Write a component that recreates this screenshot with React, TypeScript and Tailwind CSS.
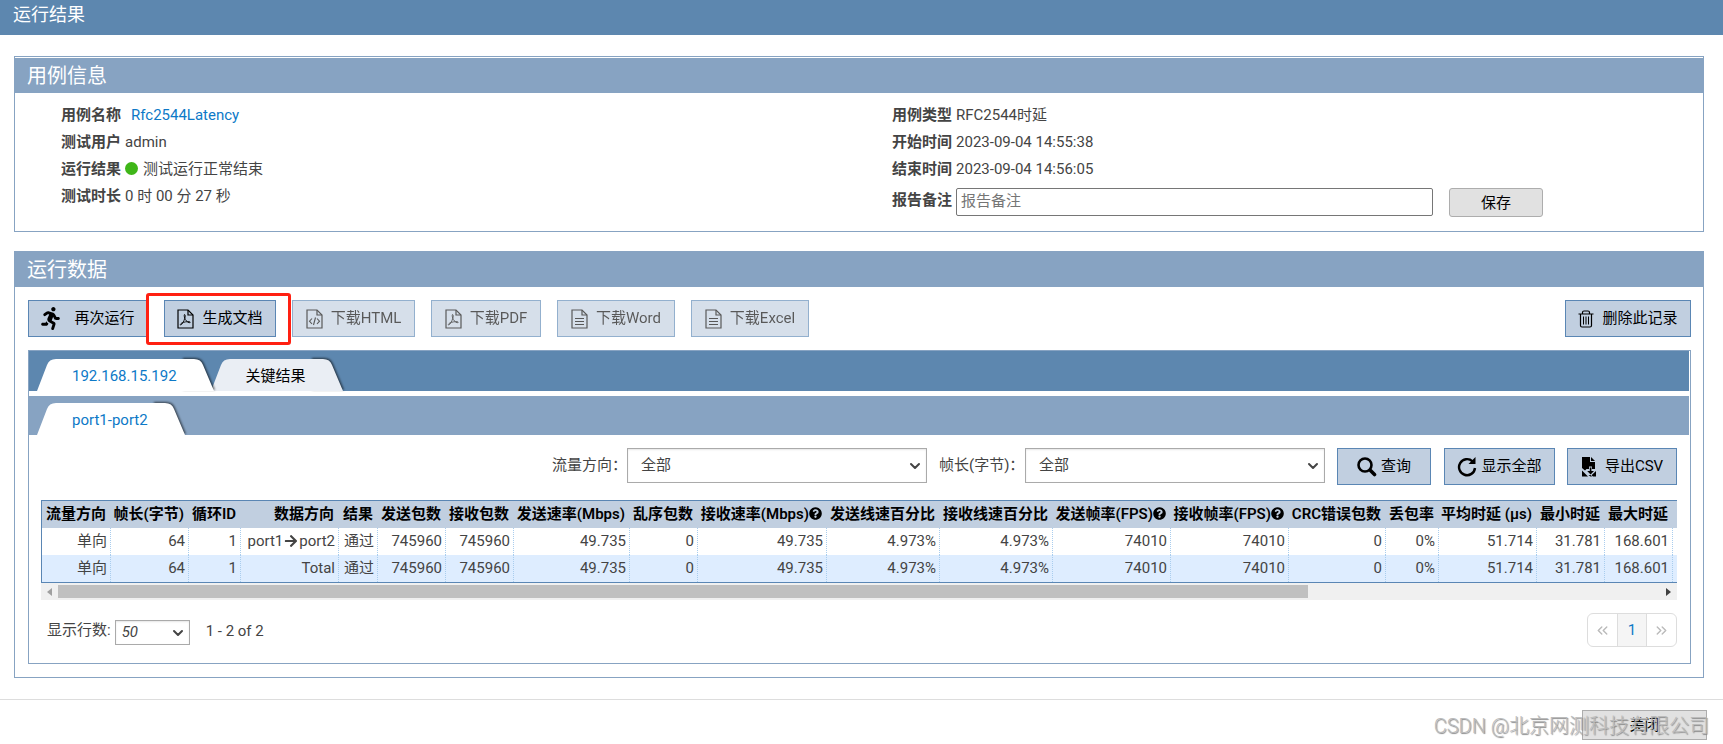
import type { ReactNode } from 'react'
import { FaArrowRight, FaQuestionCircle, FaRunning } from 'react-icons/fa'
import { ChevronDown, ChevronsLeft, ChevronsRight } from 'lucide-react'

const columns = [
    { title: '流量方向', width: 69, rows: ['单向', '单向'] },
    { title: '帧长(字节)', width: 78, rows: ['64', '64'] },
    { title: '循环ID', width: 52, rows: ['1', '1'] },
    { title: '数据方向', width: 98, rows: ['port1>port2', 'Total'] },
    { title: '结果', width: 39, rows: ['通过', '通过'] },
    { title: '发送包数', width: 68, rows: ['745960', '745960'] },
    { title: '接收包数', width: 68, rows: ['745960', '745960'] },
    { title: '发送速率(Mbps)', width: 116, rows: ['49.735', '49.735'] },
    { title: '乱序包数', width: 68, rows: ['0', '0'] },
    { title: '接收速率(Mbps)', width: 129, help: true, rows: ['49.735', '49.735'] },
    { title: '发送线速百分比', width: 113, rows: ['4.973%', '4.973%'] },
    { title: '接收线速百分比', width: 113, rows: ['4.973%', '4.973%'] },
    { title: '发送帧率(FPS)', width: 118, help: true, rows: ['74010', '74010'] },
    { title: '接收帧率(FPS)', width: 118, help: true, rows: ['74010', '74010'] },
    { title: 'CRC错误包数', width: 97, rows: ['0', '0'] },
    { title: '丢包率', width: 53, rows: ['0%', '0%'] },
    { title: '平均时延 (μs)', width: 98, rows: ['51.714', '51.714'] },
    { title: '最小时延', width: 68, rows: ['31.781', '31.781'] },
    { title: '最大时延', width: 68, rows: ['168.601', '168.601'] },
    { title: '', width: 90, rows: ['', ''] },
]

const FileIcon = ({ children }: { children: ReactNode }) => (
    <svg width="17" height="20" viewBox="0 0 17 20" fill="none" stroke="currentColor" strokeWidth="1.2">
        <path d="M1 1h10l5 5v13H1z" />
        <path d="M11 1v5h5" />
        {children}
    </svg>
)

const PdfIcon = () => (
    <FileIcon>
        <path strokeWidth="0.9" d="M7.500 5.500c1 0 .8 2.200.3 3.800C7 12 5.200 15.300 3.800 16c-.8.200-.5-1.200 1-2 2-1 5.500-1.600 7.700-1.300 1.300.3.800 1.300-.5 1-1.700-.5-3.700-2.700-4.300-4.600C7.200 7.500 7 5.700 7.500 5.500z" />
    </FileIcon>
)

const HtmlIcon = () => (
    <FileIcon>
        <path strokeWidth="1.1" d="M6 9.500l-2.500 2.700L6 15M11 9.500l2.500 2.700L11 15M9.500 8.500l-2 7.500" />
    </FileIcon>
)

const TextIcon = () => (
    <FileIcon>
        <path d="M4 9.500h9M4 12.500h9M4 15.500h9" />
    </FileIcon>
)

const TrashIcon = () => (
    <svg width="16" height="18" viewBox="0 0 16 18" fill="none" stroke="currentColor" strokeWidth="1.2">
        <path d="M.5 4h15M4.500 4V2.500Q4.500 1 6 1h4q1.500 0 1.500 1.500V4M2.500 4v11.500Q2.500 17 4 17h8q1.500 0 1.500-1.500V4" />
        <path strokeWidth="1" d="M5.500 6.500v8M8 6.500v8M10.500 6.500v8" />
    </svg>
)

const SearchIcon = () => (
    <svg width="20" height="20" viewBox="0 0 20 20" fill="none" stroke="currentColor">
        <circle cx="8" cy="8" r="6.500" strokeWidth="2.600" />
        <path strokeWidth="3.600" strokeLinecap="round" d="M13.500 13.500l4 4" />
    </svg>
)

const ReloadIcon = () => (
    <svg width="20" height="20" viewBox="0 0 20 20" fill="none" stroke="currentColor" strokeWidth="2.400">
        <path d="M15.500 4.300A8 8 0 1 0 18 11" />
        <path d="M18.500 0v7h-7z" fill="currentColor" stroke="none" />
    </svg>
)

const CsvIcon = () => (
    <svg width="16" height="20" viewBox="0 0 16 20" fill="currentColor">
        <path d="M1 0h8v5h5v7h-3V9.500H8V12H5.500L4 13.500 1 11z" />
        <path d="M10 0l4 4h-4z" />
        <path d="M8.800 10.500h1.600v3.500h2.600l-3.400 3.600L6.200 14h2.600z" />
        <path d="M1 13.500l6 6H1zM15 14v5.500h-3l-1.500-1.300zM7.500 18l2 1.500h1.500L9.500 18z" />
    </svg>
)

const Tab = ({ label, active, next }: { label: string, active?: boolean, next?: boolean }) => {
    const fill = active ? 'text-white' : 'text-[#eaeef4]'
    return (
        <button type="button" className={`flex h-8 ${active ? 'relative z-10' : ''} ${next ? '-ml-[5px]' : ''}`}>
            <svg width="35" height="32" viewBox="0 0 35 32" className={fill}>
                <path fill="currentColor" d="M0 32L10 6Q12 0 19 0H35V32z" />
            </svg>
            <span className={`h-8 pr-px leading-[34px] ${active ? 'bg-white text-[#0d79c7]' : 'bg-[#eaeef4] text-black'}`}>{label}</span>
            <svg width="38" height="32" viewBox="0 0 38 32" className={`${fill} overflow-visible drop-shadow-[1px_-1px_1px_rgba(0,0,0,0.600)]`}>
                <path fill="currentColor" d="M4 0H16Q23 0 25 6L36 32H4z" />
            </svg>
            <span className={`-ml-[38px] h-8 w-[14px] ${active ? 'bg-white' : 'bg-[#eaeef4]'} relative mr-6`}></span>
        </button>
    )
}

const ToolButton = ({ icon, label, disabled, className = '' }: { icon: ReactNode, label: string, disabled?: boolean, className?: string }) => (
    <button
        type="button"
        disabled={disabled}
        className={`flex h-[37px] items-center justify-center border border-[#5a86b4] bg-[#c1cfe0] text-black disabled:opacity-65 ${className}`}
    >
        {icon}
        <span className="-mt-px">{label}</span>
    </button>
)

const FilterSelect = ({ id, label, className }: { id: string, label: string, className: string }) => (
    <>
        <label htmlFor={id} className={`leading-[34px] whitespace-nowrap ${className}`}>{label}</label>
        <div className="relative mr-3 h-[35px] w-[300px]">
            <select id={id} className="h-full w-full appearance-none border border-[#aaa] bg-white pr-8 pb-0.5 pl-[13px] shadow-[inset_0_1px_2px_rgba(0,0,0,0.100)]">
                <option>全部</option>
            </select>
            <ChevronDown size={16} strokeWidth={3} className="pointer-events-none absolute top-[10px] right-1" />
        </div>
    </>
)

const Info = ({ label, children }: { label: string, children: ReactNode }) => (
    <div className="flex h-[27px] items-center gap-1">
        <b className="font-semibold">{label}</b>
        {children}
    </div>
)

const DataTable = () => (
    <div className="mt-[15px]">
        <div className="overflow-hidden border-y border-l border-[#5a86b4]">
            <table className="w-[1721px] table-fixed border-separate border-spacing-0 text-right whitespace-nowrap">
                <colgroup>
                    {columns.map((c, i) => <col key={i} style={{ width: c.width }} />)}
                </colgroup>
                <thead>
                    <tr className="bg-[#c1cfe0] text-black">
                        {columns.map((c, i) => (
                            <th key={i} className="h-[27px] p-0 pr-[5px] pb-0.5 text-right font-semibold">
                                <span className="flex items-center justify-end">
                                    {c.title}
                                    {c.help && <FaQuestionCircle size={13} />}
                                </span>
                            </th>
                        ))}
                    </tr>
                </thead>
                <tbody>
                    {[0, 1].map((r) => (
                        <tr key={r} className="even:bg-[#deedff]">
                            {columns.map((c, i) => (
                                <td key={i} className="h-[27px] border-r border-dotted border-[#a9cdee] p-0 pr-[3px] pb-0.5">
                                    {c.rows[r].includes('>') ? (
                                        <span className="flex items-center justify-end gap-px">
                                            port1<FaArrowRight size={14} className="text-[#444]" />port2
                                        </span>
                                    ) : c.rows[r]}
                                </td>
                            ))}
                        </tr>
                    ))}
                </tbody>
            </table>
        </div>
        <div className="flex h-[17px] items-center bg-[#f0f0f0]">
            <span className="mx-1.5 border-y-4 border-r-[5px] border-y-transparent border-r-[#a0a0a0]"></span>
            <div className="flex-1">
                <div className="h-[13px] w-[78%] bg-[#c0c0c0]"></div>
            </div>
            <span className="mx-1.5 border-y-4 border-l-[5px] border-y-transparent border-l-[#404040]"></span>
        </div>
    </div>
)

const App = () => {
    return (
        <div className="relative bg-white font-['Roboto','Noto_Sans_CJK_SC',sans-serif] text-[15px] leading-[22px] text-[#444]">
            <header className="h-[35px] bg-[#5d87af] pl-[13px]">
                <h1 className="text-[18px] leading-[30px] text-white">运行结果</h1>
            </header>

            <main className="mt-[21px] mr-[19px] ml-[14px]">
                <section className="border border-[#87a3c2] pt-px">
                    <h2 className="h-[35px] bg-[#87a3c2] pl-3 text-[20px] leading-[36px] text-white">用例信息</h2>
                    <div className="grid grid-cols-2 pt-2 pb-[14px]">
                        <div className="pl-[46px]">
                            <Info label="用例名称"><a href="#" className="ml-1.5 text-[#0d79c7]">Rfc2544Latency</a></Info>
                            <Info label="测试用户">admin</Info>
                            <Info label="运行结果">
                                <span className="mr-px h-[13px] w-[13px] rounded-full bg-[#3fb618]"></span>测试运行正常结束
                            </Info>
                            <Info label="测试时长">0 时 00 分 27 秒</Info>
                        </div>
                        <div className="pl-[33px]">
                            <Info label="用例类型">RFC2544时延</Info>
                            <Info label="开始时间">2023-09-04 14:55:38</Info>
                            <Info label="结束时间">2023-09-04 14:56:05</Info>
                            <div className="mt-1.5 flex items-start">
                                <label htmlFor="remark" className="mr-1 leading-[25px] font-semibold">报告备注</label>
                                <input id="remark" placeholder="报告备注" className="h-7 w-[477px] rounded-[2px] border border-[#767676] px-1 pb-0.5 placeholder:text-[#757575]" />
                                <button type="button" className="ml-4 h-[29px] w-[94px] rounded-[3px] border border-[#adadad] bg-[#e1e1e1] text-black">保存</button>
                            </div>
                        </div>
                    </div>
                </section>

                <section className="mt-[19px] border border-[#87a3c2]">
                    <h2 className="h-[35px] bg-[#87a3c2] pl-3 text-[20px] leading-[36px] text-white">运行数据</h2>
                    <div className="pt-[13px] pr-3 pb-[13px] pl-[13px]">
                        <div className="flex gap-4">
                            <ToolButton className="w-[120px] gap-3 pr-0.5" icon={<FaRunning size={23} />} label="再次运行" />
                            <div className="relative">
                                <ToolButton className="w-[112px] gap-2" icon={<PdfIcon />} label="生成文档" />
                                <div className="pointer-events-none absolute -top-[7px] -right-[15px] -bottom-2 -left-[18px] rounded-[3px] border-3 border-[#ff2012]"></div>
                                <div className="absolute top-0 -left-[15px] h-[37px] w-[3px] bg-white"></div>
                            </div>
                            <ToolButton disabled className="w-[123px] gap-2" icon={<HtmlIcon />} label="下载HTML" />
                            <ToolButton disabled className="w-[110px] gap-2" icon={<PdfIcon />} label="下载PDF" />
                            <ToolButton disabled className="w-[118px] gap-2" icon={<TextIcon />} label="下载Word" />
                            <ToolButton disabled className="w-[118px] gap-2" icon={<TextIcon />} label="下载Excel" />
                            <ToolButton className="ml-auto w-[126px] gap-2" icon={<TrashIcon />} label="删除此记录" />
                        </div>

                        <div className="mt-[13px] border border-[#87a3c2]">
                            <div className="mr-px flex h-10 items-end bg-[#5d87af] pl-2">
                                <Tab label="192.168.15.192" active />
                                <Tab label="关键结果" next />
                            </div>
                            <div className="mt-[5px] mr-px flex h-[39px] items-end overflow-hidden bg-[#87a3c2] pl-2">
                                <Tab label="port1-port2" active />
                            </div>

                            <div className="pt-[13px] pr-[13px] pb-4 pl-3">
                                <div className="flex justify-end">
                                    <FilterSelect id="direction" label="流量方向：" className="w-[75px]" />
                                    <FilterSelect id="frame" label="帧长(字节)：" className="w-[86px]" />
                                    <ToolButton className="w-[94px] gap-1" icon={<SearchIcon />} label="查询" />
                                    <ToolButton className="ml-[13px] w-[111px] gap-1" icon={<ReloadIcon />} label="显示全部" />
                                    <ToolButton className="ml-3 w-[110px] gap-2" icon={<CsvIcon />} label="导出CSV" />
                                </div>

                                <DataTable />

                                <div className="mt-[13px] flex h-[34px] items-center">
                                    <label htmlFor="size" className="ml-1.5">显示行数:</label>
                                    <div className="relative mt-1 ml-1 h-[25px] w-[75px]">
                                        <select id="size" className="h-full w-full appearance-none border border-[#aaa] bg-white pl-1.5 italic shadow-[inset_0_1px_2px_rgba(0,0,0,0.100)]">
                                            <option>50</option>
                                        </select>
                                        <ChevronDown size={16} strokeWidth={3} className="pointer-events-none absolute top-[5px] right-1" />
                                    </div>
                                    <span className="mt-0.5 ml-4">1 - 2 of 2</span>
                                    <nav className="ml-auto flex h-[34px] w-[90px] divide-x divide-[#ddd] overflow-hidden rounded-md border border-[#ddd]">
                                        <button type="button" aria-label="上一页" className="flex flex-1 items-center justify-center text-[#bbb]"><ChevronsLeft size={17} /></button>
                                        <button type="button" className="flex-1 bg-[#f5f5f5] text-[#0d79c7]">1</button>
                                        <button type="button" aria-label="下一页" className="flex flex-1 items-center justify-center text-[#bbb]"><ChevronsRight size={17} /></button>
                                    </nav>
                                </div>
                            </div>
                        </div>
                    </div>
                </section>
            </main>

            <footer className="relative mt-[21px] flex justify-end border-t border-[#ddd] pt-2.5 pr-4">
                <button type="button" className="h-[30px] w-[125px] border border-[#adadad] bg-[#e1e1e1] text-black">关闭</button>
                <span className="pointer-events-none absolute top-3 right-[14px] text-[20px] leading-7 font-light text-[#bbb] [text-shadow:1px_1px_1px_#888]">CSDN @北京网测科技有限公司</span>
            </footer>
        </div>
    )
}

export default App
